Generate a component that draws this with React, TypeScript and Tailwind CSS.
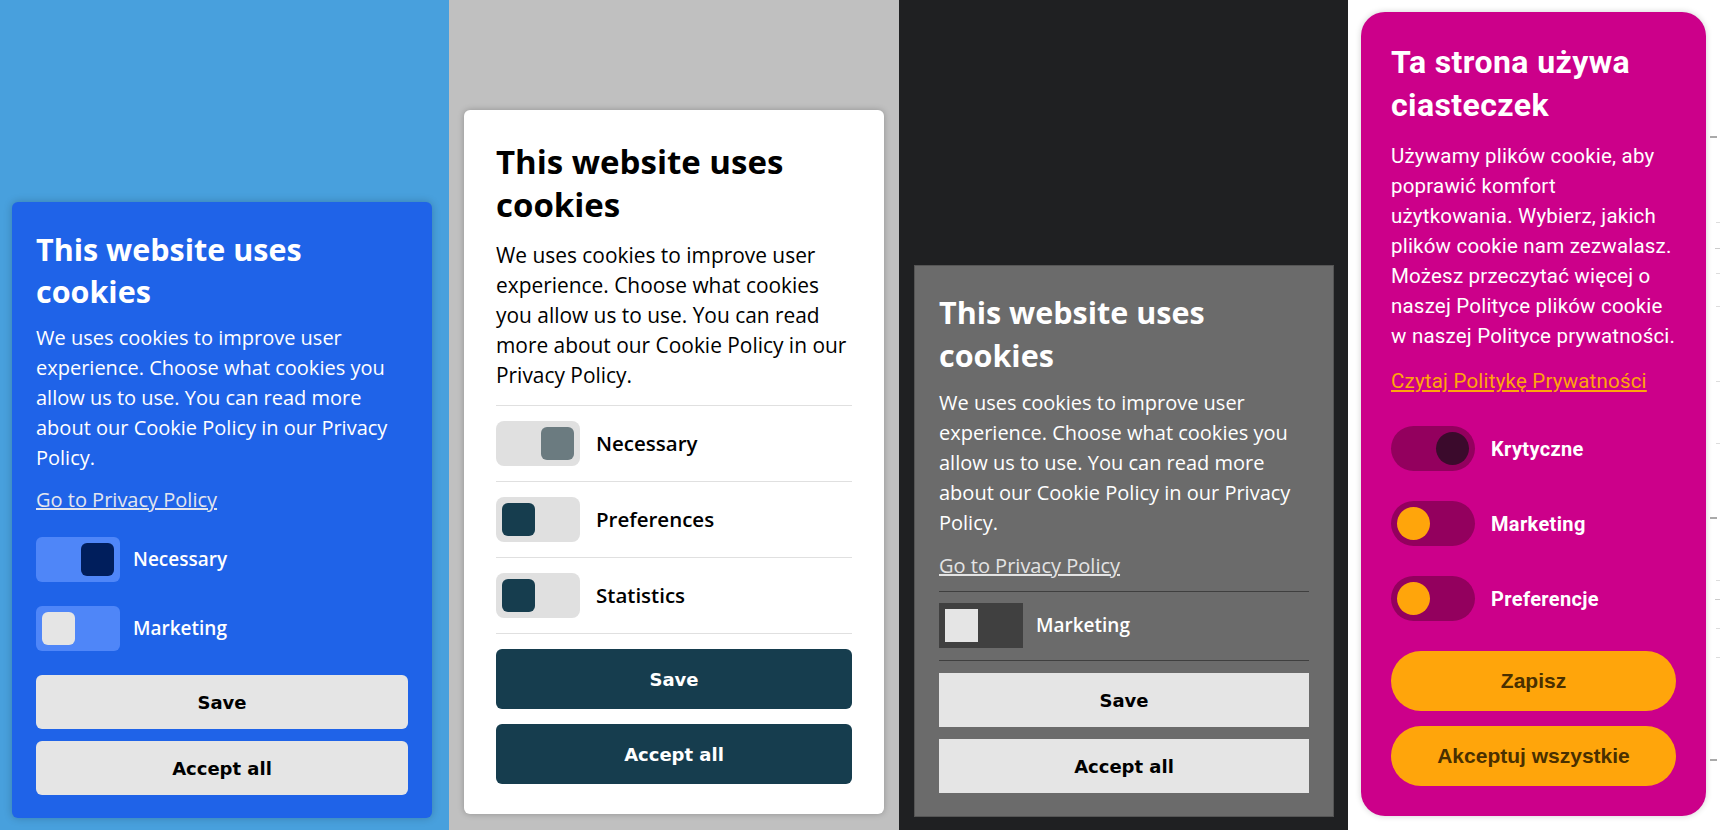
type ToggleProps = {
  on: boolean;
  track: string;
  thumb: string;
};

function Toggle({ on, track, thumb }: ToggleProps) {
  return (
    <div
      className={`flex h-[45px] w-[84px] shrink-0 items-center p-[6px] ${
        on ? "justify-end" : "justify-start"
      } ${track}`}
    >
      <div className={`h-[33px] w-[33px] ${thumb}`} />
    </div>
  );
}

const BODY_TEXT =
  "We uses cookies to improve user experience. Choose what cookies you allow us to use. You can read more about our Cookie Policy in our Privacy Policy.";

function BlueCard() {
  return (
    <div className="w-[420px] rounded-md bg-[#1f63e8] px-6 pt-[26px] pb-[23px] font-['Open_Sans',sans-serif] text-white shadow-[0_0_8px_rgba(0,0,0,0.22)]">
      <h2 className="text-[30.5px] leading-[42px] font-bold">
        This website uses cookies
      </h2>
      <p className="mt-[11px] text-[20px] leading-[30px]">{BODY_TEXT}</p>
      <a className="mt-[12px] block text-[20px] leading-[30px] text-[#e3e6ee] underline">
        Go to Privacy Policy
      </a>
      <div className="mt-[22px] flex flex-col gap-[24px]">
        <div className="flex items-center gap-[13px]">
          <Toggle
            on
            track="rounded-md bg-[#4f86f8]"
            thumb="rounded-md bg-[#001e5c]"
          />
          <span className="text-[19px] font-semibold">Necessary</span>
        </div>
        <div className="flex items-center gap-[13px]">
          <Toggle
            on={false}
            track="rounded-md bg-[#4f86f8]"
            thumb="rounded-md bg-[#e5e5e5]"
          />
          <span className="text-[19px] font-semibold">Marketing</span>
        </div>
      </div>
      <div className="mt-[24px] flex flex-col gap-[12px] font-['DejaVu_Sans',sans-serif] text-[18px] font-bold text-black">
        <button className="h-[54px] rounded-md bg-[#e5e5e5]">Save</button>
        <button className="h-[54px] rounded-md bg-[#e5e5e5]">Accept all</button>
      </div>
    </div>
  );
}

function WhiteCard() {
  const rows = [
    { label: "Necessary", on: true },
    { label: "Preferences", on: false },
    { label: "Statistics", on: false }
  ];
  return (
    <div className="ml-[15px] w-[420px] rounded-md bg-white px-8 pt-[30px] pb-[30px] font-['Open_Sans',sans-serif] text-black shadow-[0_0_6px_rgba(0,0,0,0.25)]">
      <h2 className="text-[33px] leading-[43px] font-bold">
        This website uses cookies
      </h2>
      <p className="mt-[14px] text-[20.9px] leading-[30px]">{BODY_TEXT}</p>
      <div className="mt-[15px] border-b border-[#e0e0e0]">
        {rows.map((row) => (
          <div
            key={row.label}
            className="flex items-center gap-4 border-t border-[#e0e0e0] py-[15px]"
          >
            <Toggle
              on={row.on}
              track="rounded-lg bg-[#e0e0e0]"
              thumb={
                row.on
                  ? "rounded-md bg-[#6b7b80]"
                  : "rounded-md bg-[#163d4e]"
              }
            />
            <span className="text-[20.5px] font-semibold">{row.label}</span>
          </div>
        ))}
      </div>
      <div className="mt-[15px] flex flex-col gap-[15px] font-['DejaVu_Sans',sans-serif] text-[18px] font-bold text-white">
        <button className="h-[60px] rounded-md bg-[#163d4e]">Save</button>
        <button className="h-[60px] rounded-md bg-[#163d4e]">Accept all</button>
      </div>
    </div>
  );
}

function GrayCard() {
  return (
    <div className="ml-[15px] w-[420px] border border-[#555555] bg-[#6b6b6b] px-6 pt-[25px] pb-[23px] font-['Open_Sans',sans-serif] text-white">
      <h2 className="text-[30.5px] leading-[43px] font-bold">
        This website uses cookies
      </h2>
      <p className="mt-[11px] text-[20px] leading-[30px]">{BODY_TEXT}</p>
      <a className="mt-[13px] block text-[20px] leading-[30px] text-[#e3e3e3] underline">
        Go to Privacy Policy
      </a>
      <div className="mt-[10px] flex items-center gap-[13px] border-y border-[#3f3f3f] pt-[11px] pb-[12px]">
        <Toggle on={false} track="bg-[#404040]" thumb="bg-[#e5e5e5]" />
        <span className="text-[19px] font-semibold">Marketing</span>
      </div>
      <div className="mt-[12px] flex flex-col gap-[12px] font-['DejaVu_Sans',sans-serif] text-[18px] font-bold text-black">
        <button className="h-[54px] bg-[#e5e5e5]">Save</button>
        <button className="h-[54px] bg-[#e5e5e5]">Accept all</button>
      </div>
    </div>
  );
}

function PinkCard() {
  const rows = [
    { label: "Krytyczne", on: true },
    { label: "Marketing", on: false },
    { label: "Preferencje", on: false }
  ];
  return (
    <div className="ml-[13px] mt-[12px] w-[345px] shrink-0 rounded-[24px] bg-[#cc008a] px-[30px] pt-[29px] pb-[30px] font-['Roboto',sans-serif] text-white shadow-[0_0_6px_rgba(0,0,0,0.18)]">
      <h2 className="text-[32px] leading-[43px] font-bold tracking-[0.4px]">
        Ta strona używa ciasteczek
      </h2>
      <p className="mt-[14px] text-[20.5px] leading-[30px] tracking-[0.2px]">
        Używamy plików cookie, aby poprawić komfort użytkowania. Wybierz,
        jakich plików cookie nam zezwalasz. Możesz przeczytać więcej o naszej
        Polityce plików cookie w naszej Polityce prywatności.
      </p>
      <a className="mt-[15px] block text-[20.5px] leading-[30px] tracking-[0.2px] text-[#ffa50b] underline">
        Czytaj Politykę Prywatności
      </a>
      <div className="mt-[30px] flex flex-col gap-[30px]">
        {rows.map((row) => (
          <div key={row.label} className="flex items-center gap-4">
            <Toggle
              on={row.on}
              track="rounded-full bg-[#93005e]"
              thumb={
                row.on
                  ? "rounded-full bg-[#3b0a2c]"
                  : "rounded-full bg-[#ffa50b]"
              }
            />
            <span className="text-[20px] font-bold tracking-[0.35px]">
              {row.label}
            </span>
          </div>
        ))}
      </div>
      <div className="mt-[30px] flex flex-col gap-[15px] font-['Liberation_Sans',Arial,sans-serif] text-[21px] font-bold text-[#4a3000]">
        <button className="h-[60px] rounded-full bg-[#ffa50b]">Zapisz</button>
        <button className="h-[60px] rounded-full bg-[#ffa50b]">
          Akceptuj wszystkie
        </button>
      </div>
    </div>
  );
}

// bits of the next column peeking in at the right edge
function EdgeMarks() {
  return (
    <div className="ml-[4px] flex flex-1 flex-col">
      <div className="mt-[136px] h-[2px] w-[7px] bg-[#aaaaaa]" />
      <div className="mt-[84px] ml-[6px] h-px bg-[#dddddd]" />
      <div className="mt-[25px] ml-[5px] h-px bg-[#cccccc]" />
      <div className="mt-[24px] ml-[6px] h-px bg-[#dddddd]" />
      <div className="mt-[32px] ml-[6px] h-px bg-[#dddddd]" />
      <div className="mt-[74px] ml-[6px] h-px bg-[#dddddd]" />
      <div className="mt-[61px] ml-[6px] h-px bg-[#dddddd]" />
      <div className="mt-[73px] h-[2px] w-[7px] bg-[#aaaaaa]" />
      <div className="mt-[61px] ml-[6px] h-px bg-[#dddddd]" />
      <div className="mt-[18px] ml-[5px] h-px bg-[#cccccc]" />
      <div className="mt-[28px] ml-[6px] h-px bg-[#dddddd]" />
      <div className="mt-[28px] ml-[6px] h-px bg-[#dddddd]" />
      <div className="mt-[101px] h-[2px] w-[7px] bg-[#aaaaaa]" />
    </div>
  );
}

export default function App() {
  return (
    <div className="flex h-[830px] w-[1720px] overflow-hidden">
      <section className="flex w-[449px] shrink-0 flex-col justify-end bg-[#48a0dd] pb-[12px] pl-[12px]">
        <BlueCard />
      </section>
      <section className="flex w-[450px] shrink-0 flex-col justify-end bg-[#c0c0c0] pb-[16px]">
        <WhiteCard />
      </section>
      <section className="flex w-[449px] shrink-0 flex-col justify-end bg-[#1f2022] pb-[13px]">
        <GrayCard />
      </section>
      <section className="flex flex-1 items-start bg-white">
        <PinkCard />
        <EdgeMarks />
      </section>
    </div>
  );
}
